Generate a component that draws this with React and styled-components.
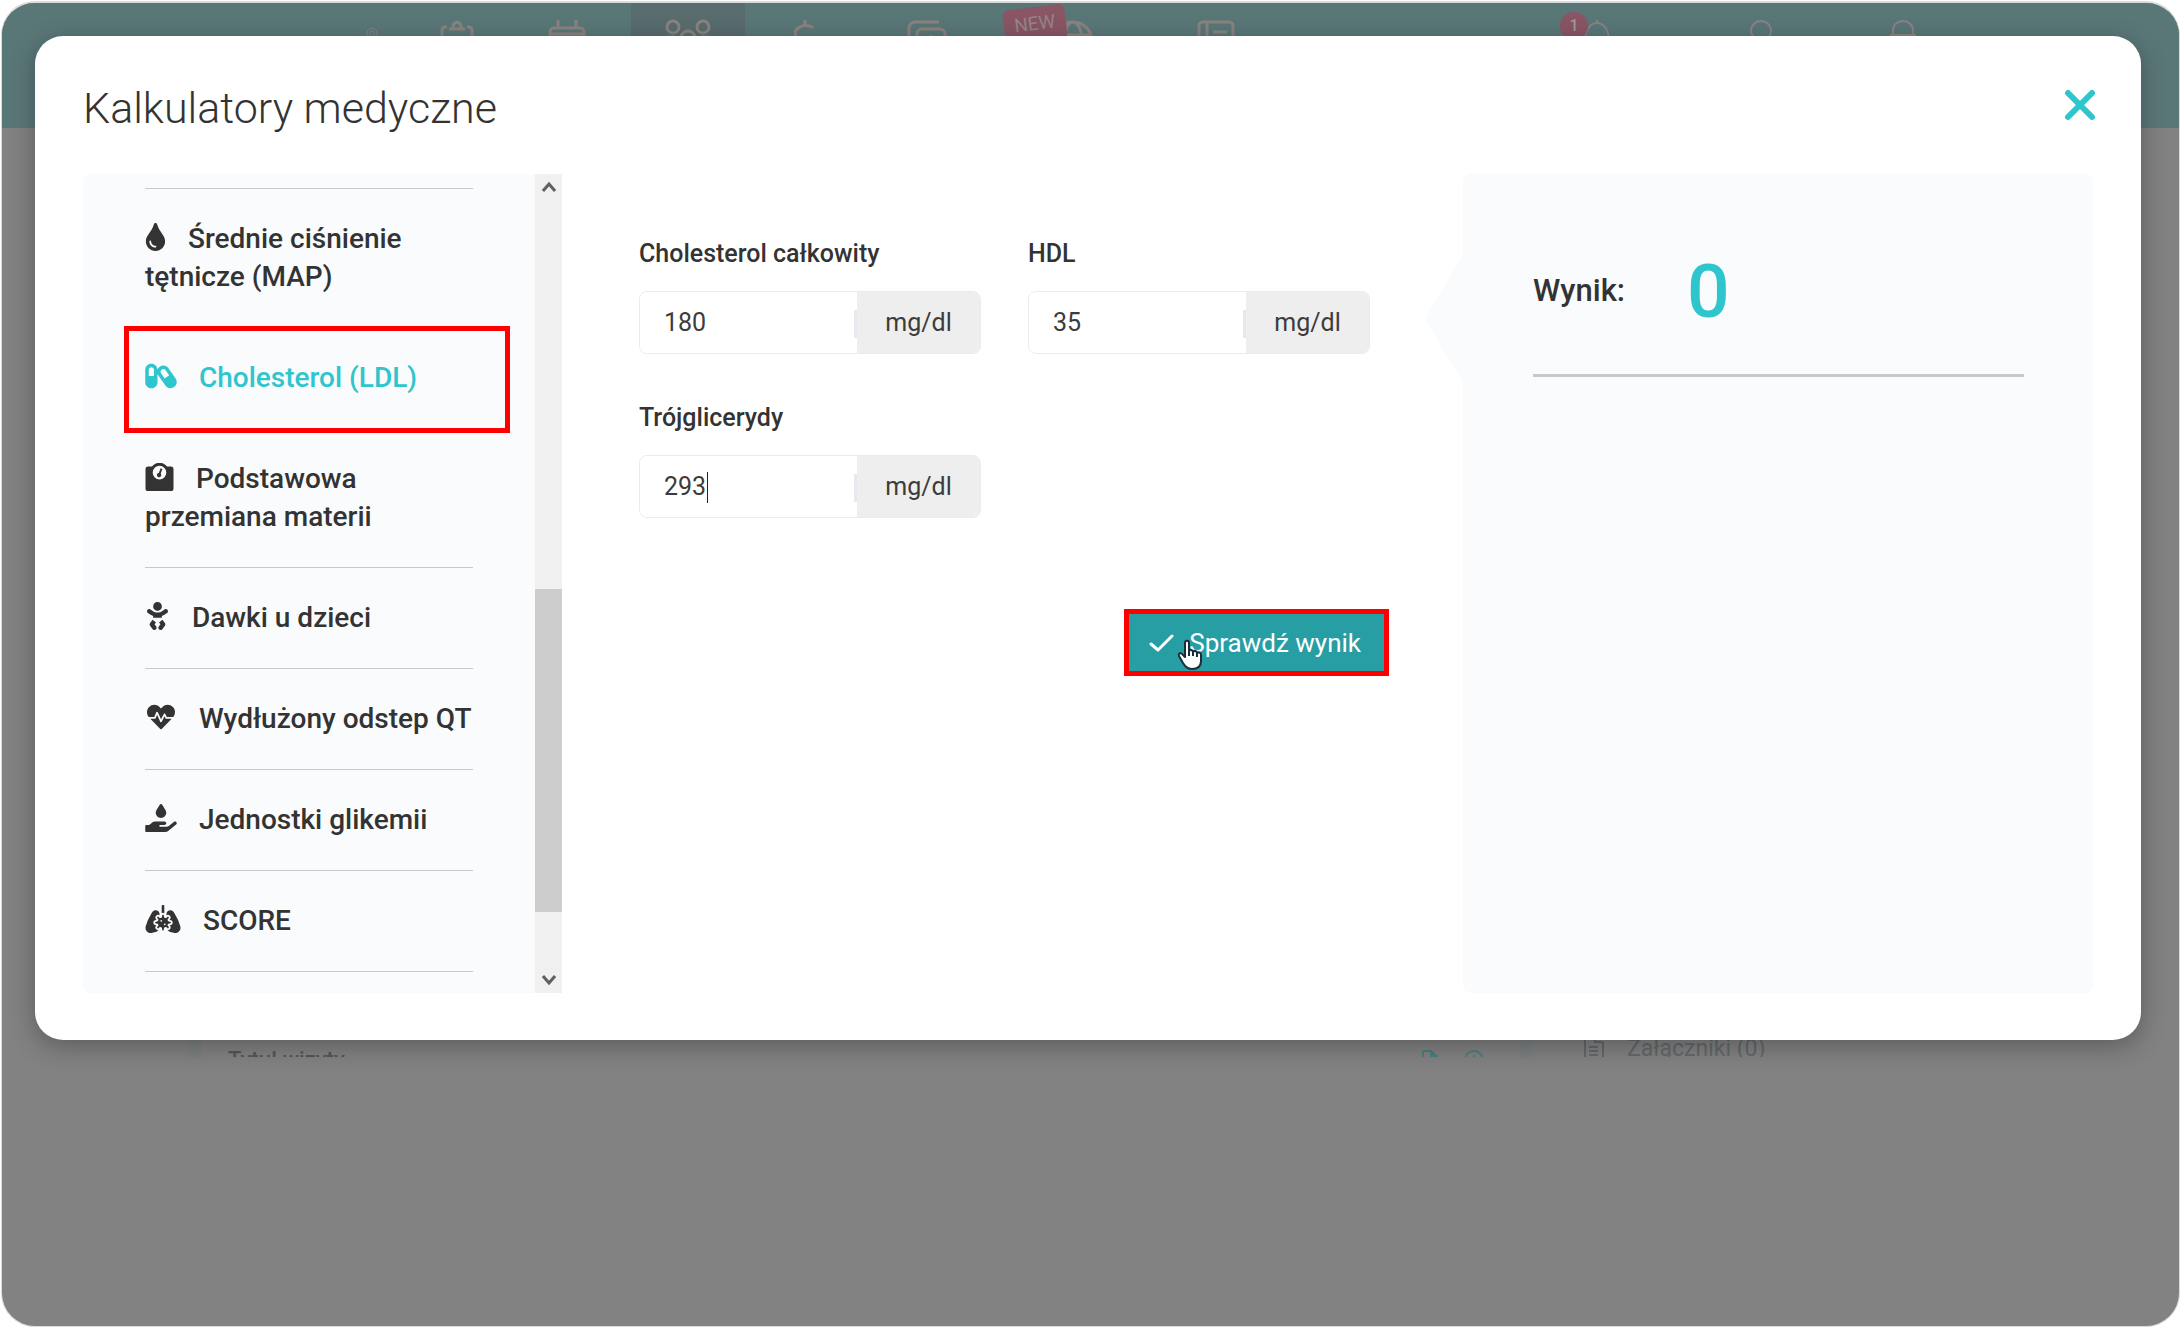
import React, { useState } from 'react'
import styled, { createGlobalStyle } from 'styled-components'
import { FaTint, FaCapsules, FaBaby, FaHeartbeat, FaHandHoldingWater, FaLungsVirus } from 'react-icons/fa'

const GlobalStyle = createGlobalStyle`
*{
box-sizing:border-box;
}
body{
margin:0;
background:#fff;
color:#333;
font-family:Roboto, "Liberation Sans", sans-serif;
}
`

const Frame = styled.div`
position:relative;
min-height:calc(100vh - 3px);
margin:1px 1px 2px;
border:1px solid #d9dcdc;
border-top-width:2px;
border-radius:34px;
background:#828282;
overflow:hidden;
`

/* page behind the dialog */
const Page = styled.div`
height:1054px;
overflow:hidden;
display:flex;
flex-direction:column;
justify-content:space-between;
`
const TopBar = styled.nav`
display:flex;
height:125px;
padding:0 216px 0 331px;
background:#5a7778;
`
const Tab = styled.a`
position:relative;
display:flex;
justify-content:center;
align-items:flex-start;
width:${props => props.$width}px;
margin-left:${props => (props.$push ? 'auto' : '0')};
padding-top:${props => (props.$low ? 22 : 14)}px;
background:${props => (props.$active ? '#596c6e' : 'transparent')};
color:#8a8380;
svg{
fill:none;
stroke:currentColor;
stroke-width:${props => props.$stroke || 3};
}
`
const NewBadge = styled.span`
position:absolute;
left:12px;
top:4px;
width:62px;
height:36px;
border-radius:6px;
background:#8a5565;
color:#94868a;
font-size:19px;
line-height:34px;
text-align:center;
transform:rotate(-7deg);
`
const CountBadge = styled.span`
position:absolute;
left:45px;
top:9px;
width:28px;
height:28px;
border-radius:14px;
background:#8a5565;
color:#a09a9c;
font-size:16px;
font-weight:500;
line-height:28px;
text-align:center;
`
const PageFooter = styled.div`
display:flex;
align-items:flex-start;
height:20px;
padding-left:178px;
font-size:22px;
line-height:26px;
`
const Strip = styled.span`
width:22px;
height:20px;
background:linear-gradient(${props => (props.$flip ? '270deg' : '90deg')}, #828282, #7b8080);
`
const VisitTitle = styled.span`
flex:1;
padding:10px 0 0 26px;
color:#565656;
font-weight:500;
`
const FooterIcons = styled.span`
display:flex;
gap:26px;
padding:13px 36px 0 0;
color:#4b7f80;
`
const Attachments = styled.span`
display:flex;
gap:23px;
width:637px;
padding-left:42px;
color:#64686b;
font-size:23px;
line-height:24px;
`

/* dialog */
const Dialog = styled.section`
position:absolute;
top:33px;
left:33px;
right:38px;
padding:0 48px 47px;
border-radius:28px;
background:#fff;
box-shadow:0 6px 26px rgba(0,0,0,0.3);
`
const DialogHeader = styled.header`
display:flex;
justify-content:space-between;
align-items:center;
height:138px;
`
const Title = styled.h1`
margin:0;
padding-top:6px;
font-size:43px;
font-weight:300;
line-height:52px;
`
const CloseButton = styled.button`
display:flex;
padding:0;
margin-right:-4px;
border:0;
background:none;
color:#2fc5cc;
`
const DialogBody = styled.div`
display:grid;
grid-template-columns:479px minmax(0, 1fr) 630px;
`

const Sidebar = styled.aside`
display:flex;
height:819px;
border-radius:8px 0 0 8px;
background:#fafbfd;
overflow:hidden;
`
const Menu = styled.ul`
flex:1;
margin:14px 0 0;
padding:0 62px;
list-style:none;
`
const MenuItem = styled.li`
position:relative;
border-bottom:1px solid #c6c8ca;
&:first-child{
border-top:1px solid #c6c8ca;
}
`
const MenuLink = styled.a`
display:block;
padding:31px 0;
color:${props => (props.$active ? '#2fc5cc' : '#333')};
font-size:28px;
font-weight:500;
line-height:38px;
text-decoration:none;
svg{
width:${props => props.$iconWidth}px;
height:28px;
margin-right:15px;
vertical-align:-3px;
}
`
const Marker = styled.span`
position:absolute;
inset:-2px -37px -5px -21px;
border:5px solid #f00;
pointer-events:none;
`

const Scrollbar = styled.div`
display:flex;
flex-direction:column;
width:27px;
background:#f0f0f0;
`
const ScrollArrow = styled.button`
display:flex;
justify-content:center;
align-items:center;
height:26px;
padding:0;
border:0;
background:none;
color:#606060;
`
const ScrollSpace = styled.div`
flex:${props => props.$size};
`
const ScrollThumb = styled.div`
flex:322;
background:#cdcdcd;
`

const Form = styled.form`
padding:62px 93px 0 77px;
`
const Fields = styled.div`
display:grid;
grid-template-columns:repeat(2, minmax(0, 1fr));
gap:46px 47px;
`
const Field = styled.div`
display:flex;
flex-direction:column;
gap:19px;
`
const Label = styled.label`
font-size:25px;
font-weight:500;
line-height:36px;
`
const InputGroup = styled.div`
position:relative;
display:flex;
height:63px;
border:1px solid #e9ebee;
border-radius:8px;
overflow:hidden;
`
const Input = styled.input`
flex:1;
min-width:0;
padding:0 24px;
border:0;
outline:0;
background:#fff;
color:#3c3c3c;
font:400 25px Roboto, "Liberation Sans", sans-serif;
`
const Unit = styled.span`
position:relative;
width:123px;
background:#eee;
color:#3c3c3c;
font-size:25px;
line-height:62px;
text-align:center;
&::before{
content:"";
position:absolute;
left:-3px;
top:18px;
width:3px;
height:28px;
background:#e8e9ef;
}
`
const Caret = styled.span`
position:absolute;
left:67px;
top:16px;
width:1px;
height:31px;
background:#222;
`
const Actions = styled.div`
display:flex;
justify-content:flex-end;
margin:91px -19px 0 0;
`
const SubmitButton = styled.button`
position:relative;
display:flex;
align-items:center;
gap:14px;
height:67px;
padding:0 23px 0 20px;
border:5px solid #f00;
background:#279ea3;
color:#fff;
font:400 26px Roboto, "Liberation Sans", sans-serif;
white-space:nowrap;
`
const Pointer = styled.svg`
position:absolute;
left:49px;
top:25px;
`

const Result = styled.aside`
position:relative;
padding:71px 69px 0 70px;
border-radius:8px;
background:#fafbfd;
&::before{
content:"";
position:absolute;
left:-38px;
top:81px;
border:solid transparent;
border-width:64px 38px 64px 0;
border-right-color:#fafbfd;
}
`
const ResultRow = styled.div`
display:flex;
align-items:center;
gap:62px;
height:132px;
padding-bottom:38px;
border-bottom:3px solid #c9c9c9;
font-size:31px;
font-weight:500;
`
const Score = styled.output`
color:#2fc5cc;
font-size:75px;
font-weight:500;
line-height:90px;
`

const ScaleIcon = () => (
  <svg viewBox="0 0 512 512" fill="currentColor">
    <path fillRule="evenodd" d="M48 64h70a176 176 0 0 1 276 0h70a48 48 0 0 1 48 48v352a48 48 0 0 1-48 48H48a48 48 0 0 1-48-48V112a48 48 0 0 1 48-48zM256 52a124 124 0 1 0 0 248 124 124 0 0 0 0-248z" />
    <path d="M278 98l30 12-30 88a38 38 0 1 1-36-14z" />
  </svg>
)

const tabs = [
  { name: 'Dyktowanie', width: 78, low: true, stroke: 1, icon: <svg width="12" height="30" viewBox="0 0 12 30"><path d="M1 24V8a5 5 0 0 1 10 0v16M4 24V8a2 2 0 0 1 4 0v16" /></svg> },
  { name: 'Wizyty', width: 92, icon: <svg width="34" height="44" viewBox="0 0 34 44"><path d="M7 10H5a3 3 0 0 0-3 3v26a3 3 0 0 0 3 3h24a3 3 0 0 0 3-3V13a3 3 0 0 0-3-3h-2M9 12h16M13 12c-1-9 9-9 8 0" /></svg> },
  { name: 'Terminarz', width: 128, icon: <svg width="38" height="44" viewBox="0 0 38 44"><path d="M10 3v8M28 3v8M2 17h34M6 11h26a4 4 0 0 1 4 4v24a3 3 0 0 1-3 3H5a3 3 0 0 1-3-3V15a4 4 0 0 1 4-4z" /></svg> },
  { name: 'Pacjenci', width: 114, active: true, icon: <svg width="46" height="44" viewBox="0 0 46 44"><circle cx="8" cy="10" r="6" /><circle cx="38" cy="10" r="6" /><circle cx="23" cy="21" r="7" /><path d="M2 20h8M36 20h8M10 40a13 13 0 0 1 26 0" /></svg> },
  { name: 'Rozliczenia', width: 117, icon: <svg width="22" height="44" viewBox="0 0 22 44"><path d="M12 3v7M20 11c-3-3-9-3-13-1-7 3-6 11 1 13l7 2c7 3 6 12-2 12-5 0-9-1-11-4M12 37v6" /></svg> },
  { name: 'Dokumenty', width: 130, icon: <svg width="40" height="44" viewBox="0 0 40 44"><path d="M32 5H8a6 6 0 0 0-6 6v22M15 12h18a5 5 0 0 1 5 5v20H10V17a5 5 0 0 1 5-5zM24 18v4" /></svg> },
  { name: 'Portal', width: 162, badge: 'new', icon: <svg width="42" height="44" viewBox="0 0 42 44"><circle cx="21" cy="24" r="19" /><ellipse cx="21" cy="24" rx="9" ry="19" /><path d="M3 18h36M3 30h36" /></svg> },
  { name: 'Słowniki', width: 124, icon: <svg width="38" height="44" viewBox="0 0 38 44"><path d="M6 5h26a4 4 0 0 1 4 4v31H2V9a4 4 0 0 1 4-4zM10 5v35M16 15h14M16 22h14" /></svg> },
  { name: 'Powiadomienia', width: 164, push: true, badge: 'count', stroke: 2, icon: <svg width="28" height="44" viewBox="0 0 28 44"><path d="M14 3v3M2 24c0-24 24-24 24 0v10H2z" /></svg> },
  { name: 'Konto', width: 164, stroke: 2, icon: <svg width="24" height="44" viewBox="0 0 24 44"><circle cx="12" cy="14" r="10" /><path d="M2 42v-6c0-10 20-10 20 0v6" /></svg> },
  { name: 'Alerty', width: 120, stroke: 2, icon: <svg width="26" height="44" viewBox="0 0 26 44"><path d="M3 18v-5a10 9 0 0 1 20 0v5M1 18h24v20H1z" /></svg> },
]

const calculators = [
  { id: 'map', label: 'Średnie ciśnienie tętnicze (MAP)', icon: FaTint, width: 21 },
  { id: 'ldl', label: 'Cholesterol (LDL)', icon: FaCapsules, width: 32 },
  { id: 'ppm', label: 'Podstawowa przemiana materii', icon: ScaleIcon, width: 29 },
  { id: 'dawki', label: 'Dawki u dzieci', icon: FaBaby, width: 25 },
  { id: 'qt', label: 'Wydłużony odstep QT', icon: FaHeartbeat, width: 32 },
  { id: 'glikemia', label: 'Jednostki glikemii', icon: FaHandHoldingWater, width: 32 },
  { id: 'score', label: 'SCORE', icon: FaLungsVirus, width: 36 },
]

const fields = [
  { id: 'total', label: 'Cholesterol całkowity' },
  { id: 'hdl', label: 'HDL' },
  { id: 'tg', label: 'Trójglicerydy', caret: true },
]

const BackgroundPage = () => (
  <Page>
    <TopBar>
      {tabs.map(tab => (
        <Tab key={tab.name} href="#" aria-label={tab.name} $width={tab.width} $active={tab.active} $push={tab.push} $low={tab.low} $stroke={tab.stroke}>
          {tab.icon}
          {tab.badge === 'new' && <NewBadge>NEW</NewBadge>}
          {tab.badge === 'count' && <CountBadge>1</CountBadge>}
        </Tab>
      ))}
    </TopBar>
    <PageFooter>
      <Strip />
      <VisitTitle>Tytuł wizyty</VisitTitle>
      <FooterIcons>
        <svg width="16" height="20" viewBox="0 0 16 20" fill="none" stroke="currentColor" strokeWidth="2"><path d="M1 20V3a2 2 0 0 1 2-2h6l6 6v13" /><path d="M9 1v6h6z" fill="currentColor" /></svg>
        <svg width="20" height="20" viewBox="0 0 20 20" fill="none" stroke="currentColor" strokeWidth="2"><circle cx="10" cy="10" r="9" /><path d="M10 5v2M10 9v6" /></svg>
      </FooterIcons>
      <Strip $flip />
      <Attachments>
        <svg width="20" height="24" viewBox="0 0 20 24" fill="none" stroke="currentColor" strokeWidth="2"><path d="M1 24V0M19 24V5M11 0v5h8M5 10h9M5 14h9M5 18h9" /></svg>
        Załączniki (0)
      </Attachments>
    </PageFooter>
  </Page>
)

const App = () => {
  const [active, setActive] = useState('ldl')
  const [values, setValues] = useState({ total: '180', hdl: '35', tg: '293' })
  const [score, setScore] = useState(0)

  const handleSubmit = e => {
    e.preventDefault()
    // Friedewald
    setScore(Math.round(values.total - values.hdl - values.tg / 5))
  }

  return (
    <>
      <GlobalStyle />
      <Frame>
        <BackgroundPage />
        <Dialog role="dialog" aria-labelledby="dialog-title">
          <DialogHeader>
            <Title id="dialog-title">Kalkulatory medyczne</Title>
            <CloseButton type="button" aria-label="Zamknij">
              <svg width="34" height="34" viewBox="0 0 34 34" fill="none" stroke="currentColor" strokeWidth="6" strokeLinecap="round"><path d="M5 5l24 24M29 5L5 29" /></svg>
            </CloseButton>
          </DialogHeader>
          <DialogBody>
            <Sidebar>
              <Menu>
                {calculators.map(({ id, label, icon: Icon, width }) => (
                  <MenuItem key={id}>
                    <MenuLink href={'#' + id} $active={id === active} $iconWidth={width} onClick={() => setActive(id)}>
                      <Icon /> {label}
                    </MenuLink>
                    {id === 'ldl' && <Marker />}
                  </MenuItem>
                ))}
              </Menu>
              <Scrollbar>
                <ScrollArrow type="button" aria-label="W górę">
                  <svg width="14" height="12" viewBox="0 0 14 12" fill="none" stroke="currentColor" strokeWidth="3"><path d="M1 10l6-7 6 7" /></svg>
                </ScrollArrow>
                <ScrollSpace $size={388} />
                <ScrollThumb />
                <ScrollSpace $size={55} />
                <ScrollArrow type="button" aria-label="W dół">
                  <svg width="14" height="12" viewBox="0 0 14 12" fill="none" stroke="currentColor" strokeWidth="3"><path d="M1 2l6 7 6-7" /></svg>
                </ScrollArrow>
              </Scrollbar>
            </Sidebar>
            <Form onSubmit={handleSubmit}>
              <Fields>
                {fields.map(field => (
                  <Field key={field.id}>
                    <Label htmlFor={field.id}>{field.label}</Label>
                    <InputGroup>
                      <Input id={field.id} type="text" value={values[field.id]} onChange={e => setValues({ ...values, [field.id]: e.target.value })} />
                      {field.caret && <Caret />}
                      <Unit>mg/dl</Unit>
                    </InputGroup>
                  </Field>
                ))}
              </Fields>
              <Actions>
                <SubmitButton type="submit">
                  <svg width="26" height="20" viewBox="0 0 26 20" fill="none" stroke="currentColor" strokeWidth="3" strokeLinecap="round" strokeLinejoin="round"><path d="M2 11l7 6L23 3" /></svg>
                  Sprawdź wynik
                  <Pointer width="24" height="32" viewBox="0 0 24 32" fill="#fff" stroke="#1d2b3a" strokeWidth="2" strokeLinejoin="round">
                    <path d="M7 18V4c0-3 4-3 4 0v8c1-2 4-1 4 1 1-2 4-1 4 1 1-1 4-1 4 2v6c0 5-3 8-9 8-5 0-7-3-9-6l-4-7c-1-3 2-4 4-1z" />
                    <path d="M11 12v5M15 13v4M19 14v4" fill="none" />
                  </Pointer>
                </SubmitButton>
              </Actions>
            </Form>
            <Result>
              <ResultRow>
                <span>Wynik:</span>
                <Score>{score}</Score>
              </ResultRow>
            </Result>
          </DialogBody>
        </Dialog>
      </Frame>
    </>
  )
}

export default App
